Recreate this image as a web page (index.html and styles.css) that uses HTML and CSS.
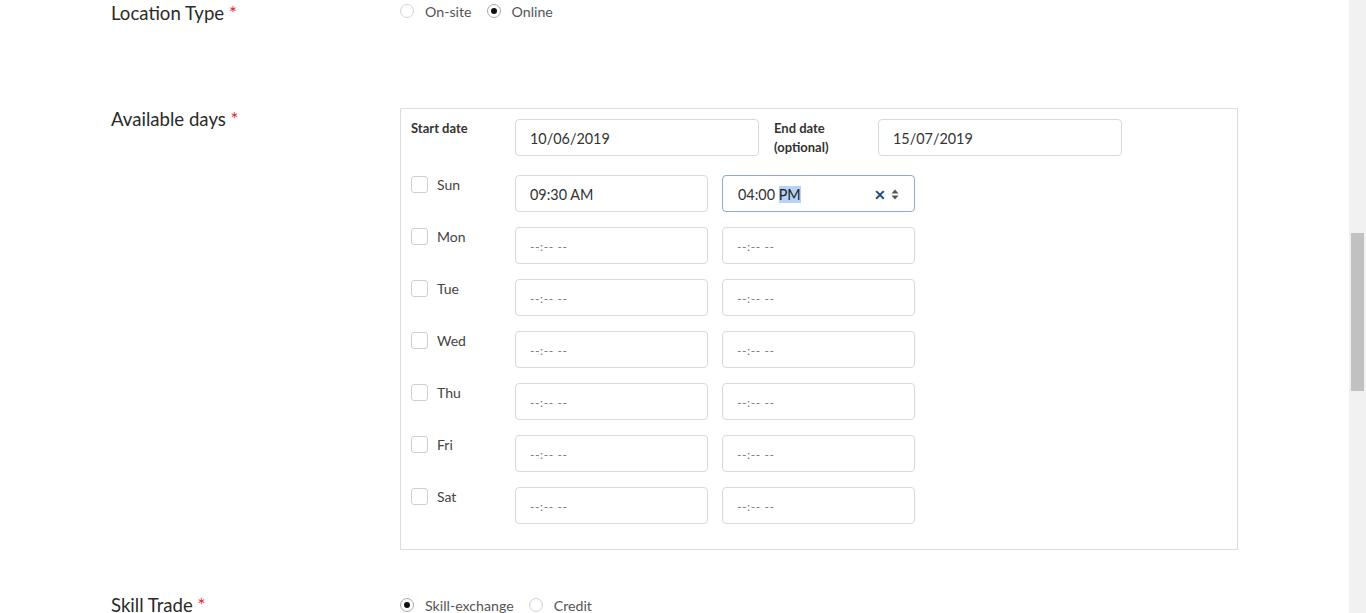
FILE: index.html
```html
<!DOCTYPE html>
<html>
<head>
<meta charset="utf-8">
<link rel="stylesheet" href="styles.css">
</head>
<body>
<div class="page">
  <div class="form-row row-location">
    <div class="label">Location Type <span class="req">*</span></div>
    <div class="radios">
      <span class="radio"></span><span class="radio-text">On-site</span>
      <span class="radio checked"></span><span class="radio-text">Online</span>
    </div>
  </div>

  <div class="form-row row-days">
    <div class="label">Available days <span class="req">*</span></div>
    <div class="days-box">
      <div class="date-row">
        <div class="date-label">Start date</div>
        <div class="field date-field">10/06/2019</div>
        <div class="date-label end-label">End date<br>(optional)</div>
        <div class="field date-field">15/07/2019</div>
      </div>
      <div class="day-row">
        <div class="day-label"><span class="checkbox"></span><span class="day-name">Sun</span></div>
        <div class="field time-field">09:30 AM</div>
        <div class="field time-field focused"><span>04:00 <span class="sel">PM</span></span><span class="controls"><span class="clear">✕</span><svg class="spin" width="8" height="11" viewBox="0 0 8 11"><path d="M0.5 4.5 L4 0.5 L7.5 4.5 Z M0.5 6.5 L4 10.5 L7.5 6.5 Z" fill="#555"/></svg></span></div>
      </div>
      <div class="day-row">
        <div class="day-label"><span class="checkbox"></span><span class="day-name">Mon</span></div>
        <div class="field time-field empty">--:-- --</div>
        <div class="field time-field empty">--:-- --</div>
      </div>
      <div class="day-row">
        <div class="day-label"><span class="checkbox"></span><span class="day-name">Tue</span></div>
        <div class="field time-field empty">--:-- --</div>
        <div class="field time-field empty">--:-- --</div>
      </div>
      <div class="day-row">
        <div class="day-label"><span class="checkbox"></span><span class="day-name">Wed</span></div>
        <div class="field time-field empty">--:-- --</div>
        <div class="field time-field empty">--:-- --</div>
      </div>
      <div class="day-row">
        <div class="day-label"><span class="checkbox"></span><span class="day-name">Thu</span></div>
        <div class="field time-field empty">--:-- --</div>
        <div class="field time-field empty">--:-- --</div>
      </div>
      <div class="day-row">
        <div class="day-label"><span class="checkbox"></span><span class="day-name">Fri</span></div>
        <div class="field time-field empty">--:-- --</div>
        <div class="field time-field empty">--:-- --</div>
      </div>
      <div class="day-row">
        <div class="day-label"><span class="checkbox"></span><span class="day-name">Sat</span></div>
        <div class="field time-field empty">--:-- --</div>
        <div class="field time-field empty">--:-- --</div>
      </div>
    </div>
  </div>

  <div class="form-row row-trade">
    <div class="label">Skill Trade <span class="req">*</span></div>
    <div class="radios">
      <span class="radio checked"></span><span class="radio-text">Skill-exchange</span>
      <span class="radio"></span><span class="radio-text">Credit</span>
    </div>
  </div>
</div>
<div class="scrollbar"><div class="thumb"></div></div>
</body>
</html>
```

FILE: styles.css
```css
html, body {
  margin: 0;
  padding: 0;
  height: 613px;
  overflow: hidden;
  background: #fff;
}
body {
  font-family: Lato, "Open Sans", sans-serif;
  color: #333;
  display: flex;
}
.page {
  width: 1349px;
  padding-left: 111px;
  box-sizing: border-box;
}
.scrollbar {
  width: 17px;
  height: 613px;
  background: #f1f1f1;
  display: flex;
  flex-direction: column;
  align-items: center;
}
.thumb {
  margin-top: 233px;
  width: 13px;
  height: 158px;
  background: #c1c1c1;
}
.form-row {
  display: flex;
}
.label {
  width: 289px;
  flex: none;
  font-size: 18.6px;
  line-height: 22px;
  color: #2a2a2a;
}
.req {
  color: #e0262f;
}
.row-location {
  padding-top: 2px;
  height: 108px;
  box-sizing: border-box;
}
.row-location .radios {
  margin-top: -2px;
}
.radios {
  display: flex;
  align-items: center;
  height: 22px;
  font-size: 14.2px;
  color: #555;
}
.radio {
  width: 14px;
  height: 14px;
  border: 1px solid #d2d2d2;
  border-radius: 50%;
  box-sizing: border-box;
  margin-right: 11px;
  position: relative;
  background: #fff;
}
.radio.checked {
  border-color: #a9a9a9;
}
.radio.checked::after {
  content: "";
  position: absolute;
  left: 3px;
  top: 3px;
  width: 6px;
  height: 6px;
  border-radius: 50%;
  background: #111;
}
.radio-text {
  margin-right: 15px;
}
.days-box {
  width: 838px;
  height: 442px;
  border: 1px solid #dedede;
  box-sizing: border-box;
  padding: 10px 10px 0 10px;
}
.date-row {
  display: flex;
  height: 37px;
  margin-bottom: 19px;
}
.date-label {
  width: 104px;
  flex: none;
  font-size: 13px;
  font-weight: 700;
  line-height: 19px;
  color: #333;
}
.end-label {
  margin-left: 15px;
}
.field {
  height: 37px;
  box-sizing: border-box;
  border: 1px solid #d9d9d9;
  border-radius: 4px;
  padding: 1px 14px 0 14px;
  display: flex;
  align-items: center;
  font-size: 14.4px;
  color: #333;
  background: #fff;
}
.date-field {
  width: 244px;
}
.day-row {
  display: flex;
  height: 37px;
  margin-bottom: 15px;
}
.day-label {
  width: 104px;
  flex: none;
  display: flex;
  align-items: flex-start;
  padding-top: 1px;
}
.checkbox {
  width: 17px;
  height: 17px;
  box-sizing: border-box;
  border: 1px solid #cfcfcf;
  border-radius: 3px;
  background: #fff;
}
.day-name {
  margin-left: 9px;
  font-size: 14px;
  line-height: 17px;
  color: #444;
}
.time-field {
  width: 193px;
}
.time-field + .time-field {
  margin-left: 14px;
}
.time-field.empty {
  color: #777;
  font-size: 12px;
  letter-spacing: 0.6px;
}
.time-field.focused {
  border-color: #8fa9cf;
  justify-content: space-between;
  padding-left: 15px;
  padding-right: 15px;
}
.sel {
  background: #b4d3f5;
  color: #222;
}
.controls {
  display: flex;
  align-items: center;
}
.clear {
  color: #2b4a7d;
  font-size: 14px;
  font-weight: 700;
  margin-right: 5px;
}
.spin {
  display: block;
}
.row-trade {
  margin-top: 44px;
}
```
